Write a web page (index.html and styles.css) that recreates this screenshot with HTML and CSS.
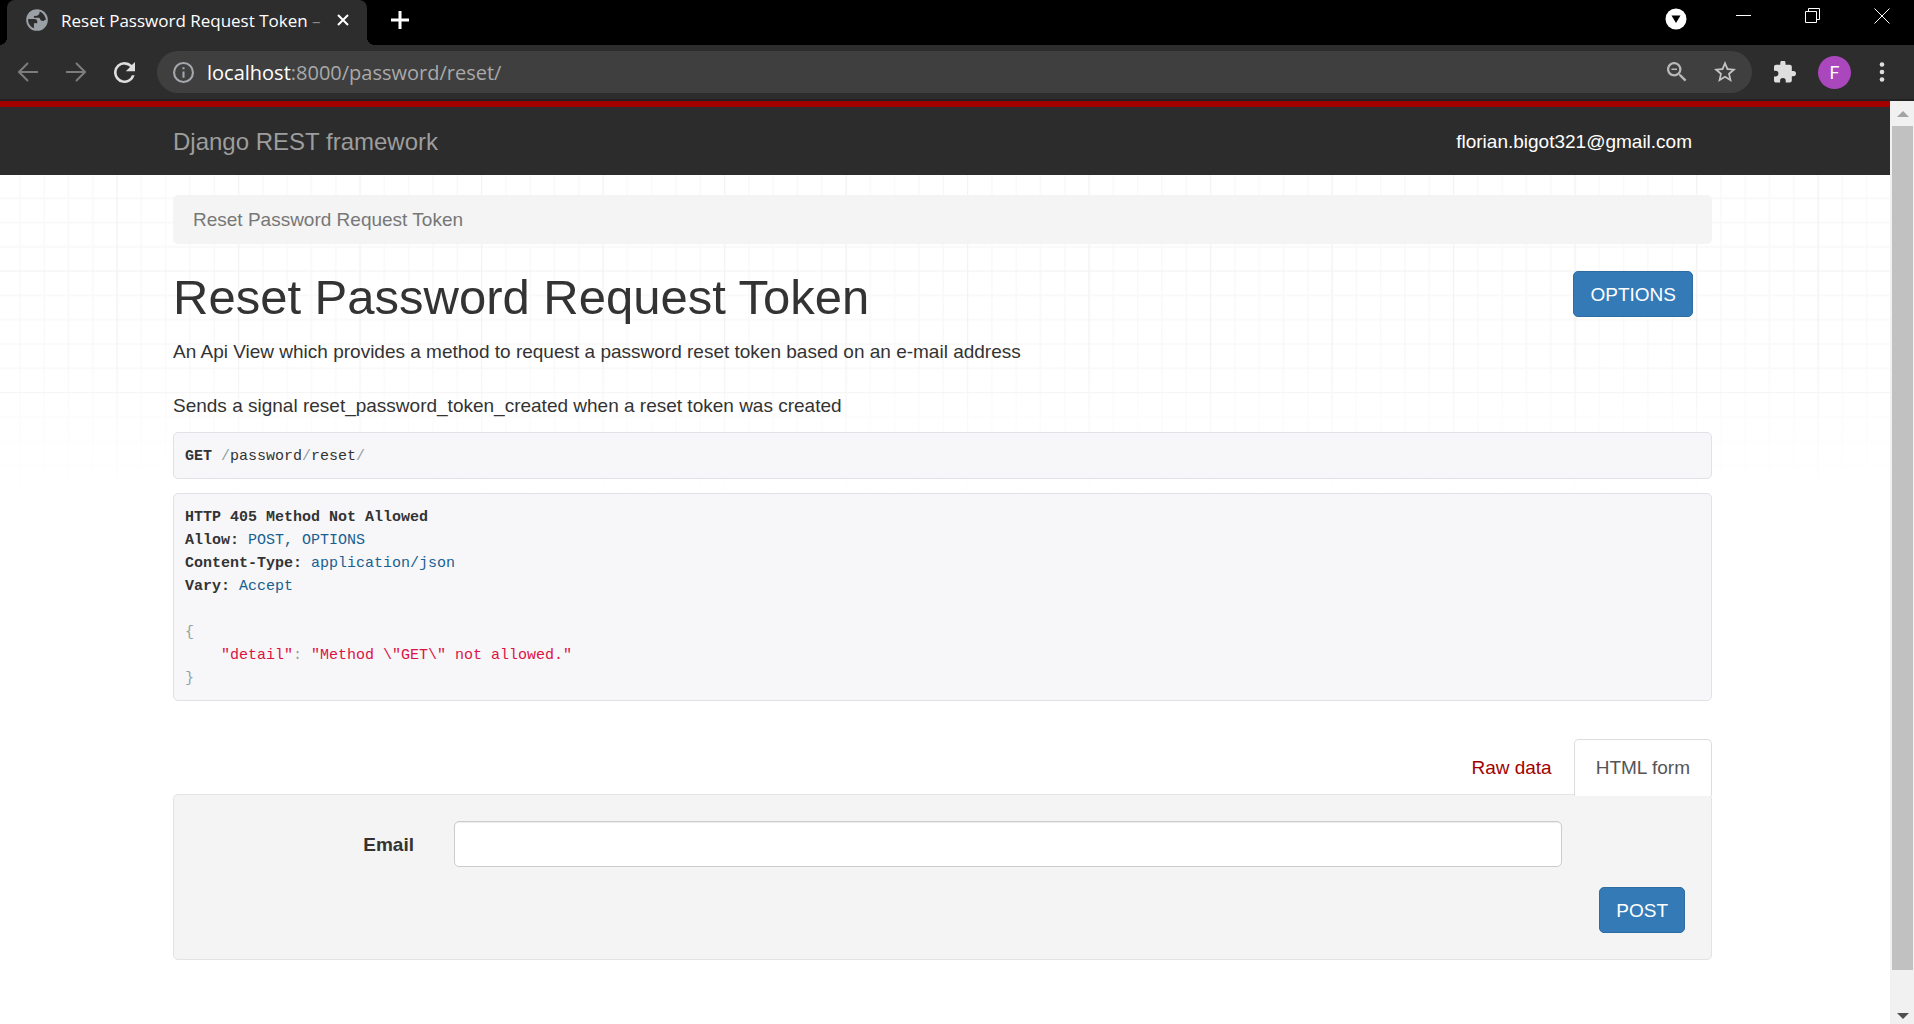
FILE: index.html
```html
<!DOCTYPE html>
<html lang="en">
<head>
<meta charset="utf-8">
<title>Reset Password Request Token – Django REST framework</title>
<link rel="stylesheet" href="styles.css">
</head>
<body>
<header class="browser">
  <div class="tab-strip">
    <div class="tab">
      <svg class="tab-icon" viewBox="0 0 24 24" width="26" height="26"><path fill="#9aa0a6" d="M12 2a10 10 0 1 0 0 20 10 10 0 0 0 0-20zm0 18.200a8.200 8.200 0 0 1-8-9.800l5 .1c2 0 3.500 1 3.500 3v1.500H9.200v4.700c.9.300 1.800.5 2.800.5zm7.300-4.500c-.5-1.200-1.300-1.700-2.600-1.700H15v-2c0-1-.6-1.500-1.600-1.500H9V8h2c1.300 0 2-.7 2-2V4c3.500.5 6.300 3.200 7 6.800.3 1.700 0 3.400-.7 4.900z" fill-rule="evenodd"/><path fill="#9aa0a6" d="M13 3C7 2 3 6 3 11h6.500c2 0 3 1 3 3v1.500H9.200v5c6 1.800 11.800-2.500 11.800-8.500h-2c-.5 1.500-3.500 1-4-.5-.2-1-.8-1.500-1.800-1.500H9V8h2.500c2 0 3-1.500 3-4.500z"/></svg>
      <span class="tab-title">Reset Password Request Token <span class="fade">–</span></span>
      <button class="icon-btn" aria-label="Close tab"><svg viewBox="0 0 12 12" width="12" height="12"><path d="M1 1l10 10M11 1L1 11" stroke="#fff" stroke-width="2"/></svg></button>
    </div>
    <button class="icon-btn new-tab" aria-label="New tab"><svg viewBox="0 0 18 18" width="18" height="18"><path d="M9 0v18M0 9h18" stroke="#fff" stroke-width="3"/></svg></button>
    <div class="window-controls">
      <button class="icon-btn search-tabs" aria-label="Search tabs"><svg viewBox="0 0 22 22" width="22" height="22"><circle cx="11" cy="11" r="10.500" fill="#fff"/><path d="M6.500 7.500h9L11 15z" fill="#000"/></svg></button>
      <button class="icon-btn" aria-label="Minimize"><svg viewBox="0 0 16 16" width="16" height="16"><path d="M0 7.500h15" stroke="#fff"/></svg></button>
      <button class="icon-btn" aria-label="Restore"><svg viewBox="0 0 16 16" width="16" height="16"><path d="M.5 3.500h11v11H.5zM3.500 3.500v-3h11v11h-3" fill="none" stroke="#fff"/></svg></button>
      <button class="icon-btn" aria-label="Close"><svg viewBox="0 0 16 16" width="16" height="16"><path d="M.5.5l15 15M15.500.5l-15 15" stroke="#fff"/></svg></button>
    </div>
  </div>
  <div class="toolbar">
    <button class="icon-btn nav" aria-label="Back"><svg viewBox="0 0 20 20" width="20" height="20"><path d="M20 10H2M10 1l-9 9 9 9" fill="none" stroke="#7c7c7c" stroke-width="2"/></svg></button>
    <button class="icon-btn nav" aria-label="Forward"><svg viewBox="0 0 20 20" width="20" height="20"><path d="M0 10h18M10 1l9 9-9 9" fill="none" stroke="#7c7c7c" stroke-width="2"/></svg></button>
    <button class="icon-btn" aria-label="Reload"><svg viewBox="4 4 16 16" width="21" height="21"><path fill="#dedede" d="M17.650 6.350A7.960 7.960 0 0 0 12 4a8 8 0 1 0 7.730 10h-2.080A6 6 0 1 1 12 6c1.660 0 3.140.690 4.220 1.780L13 11h7V4z"/></svg></button>
    <div class="address">
      <svg viewBox="2 2 20 20" width="21" height="21"><path fill="#a4a7ab" d="M11 7h2v2h-2zm0 4h2v6h-2zm1-9a10 10 0 1 0 0 20 10 10 0 0 0 0-20zm0 18a8 8 0 1 1 0-16 8 8 0 0 1 0 16z"/></svg>
      <span class="url"><span class="host">localhost</span>:8000/password/reset/</span>
      <button class="icon-btn zoom" aria-label="Zoom"><svg viewBox="3 3 18 18" width="20" height="20"><path fill="#b8b8b8" d="M15.500 14h-.790l-.280-.270A6.500 6.500 0 1 0 13.730 14.430l.270.280v.790l5 4.990L20.490 19zm-6 0a4.500 4.500 0 1 1 0-9 4.500 4.500 0 0 1 0 9zM7 8.800h5v1.400H7z"/></svg></button>
      <button class="icon-btn" aria-label="Bookmark"><svg viewBox="2 2 20 20" width="22" height="22"><path fill="#c4c4c4" d="M22 9.240l-7.190-.620L12 2 9.190 8.630 2 9.240l5.460 4.730L5.820 21 12 17.270 18.180 21l-1.630-7.030zM12 15.400l-3.760 2.270 1-4.280-3.320-2.880 4.380-.380L12 6.100l1.710 4.040 4.380.380-3.320 2.880 1 4.280z"/></svg></button>
    </div>
    <button class="icon-btn" aria-label="Extensions"><svg viewBox="2 1.500 21 21" width="22" height="22"><path fill="#dedede" d="M20.500 11H19V7a2 2 0 0 0-2-2h-4V3.500a2.500 2.500 0 0 0-5 0V5H4a2 2 0 0 0-2 2v3.800h1.500a2.700 2.700 0 0 1 0 5.400H2V20c0 1.100.9 2 2 2h3.800v-1.500a2.700 2.700 0 0 1 5.400 0V22H17a2 2 0 0 0 2-2v-4h1.500a2.500 2.500 0 0 0 0-5z"/></svg></button>
    <button class="avatar" aria-label="Profile">F</button>
    <button class="icon-btn" aria-label="Menu"><svg viewBox="0 0 6 20" width="6" height="20"><g fill="#dedede"><circle cx="3" cy="2.500" r="2.300"/><circle cx="3" cy="10" r="2.300"/><circle cx="3" cy="17.500" r="2.300"/></g></svg></button>
  </div>
</header>
<div class="viewport">
  <div class="page">
    <svg class="grid" aria-hidden="true">
      <defs>
        <pattern id="lattice" width="90" height="90" patternUnits="userSpaceOnUse" patternTransform="translate(116.400 48) scale(1.350)">
          <path d="M18.500 0v90M36.500 0v90M54.500 0v90M72.500 0v90M0 18.500h90M0 36.500h90M0 54.500h90M0 72.500h90" stroke="#f8f8f8"/>
          <path d="M.5 0v90M0 .5h90" stroke="#f2f2f2"/>
        </pattern>
      </defs>
      <rect width="100%" height="100%" fill="url(#lattice)"/>
    </svg>
    <nav class="navbar">
      <a class="brand" href="#">Django REST framework</a>
      <span class="user">florian.bigot321@gmail.com</span>
    </nav>
    <main class="content">
      <ul class="breadcrumb"><li><a href="#">Reset Password Request Token</a></li></ul>
      <div class="heading">
        <h1>Reset Password Request Token</h1>
        <button class="btn">OPTIONS</button>
      </div>
      <p>An Api View which provides a method to request a password reset token based on an e-mail address</p>
      <p>Sends a signal reset_password_token_created when a reset token was created</p>
      <pre class="code request"><b>GET</b> <i>/</i>password<i>/</i>reset<i>/</i></pre>
      <pre class="code response"><b>HTTP 405 Method Not Allowed</b>
<b>Allow:</b> <span class="lit">POST, OPTIONS</span>
<b>Content-Type:</b> <span class="lit">application/json</span>
<b>Vary:</b> <span class="lit">Accept</span>

<i>{</i>
    <span class="str">"detail"</span><i>:</i> <span class="str">"Method \"GET\" not allowed."</span>
<i>}</i></pre>
      <div class="tabs">
        <a class="form-tab" href="#">Raw data</a>
        <a class="form-tab active" href="#">HTML form</a>
      </div>
      <form class="well">
        <div class="field">
          <label for="email">Email</label>
          <input id="email" type="email">
        </div>
        <div class="actions"><button class="btn" type="button">POST</button></div>
      </form>
    </main>
  </div>
  <div class="scrollbar" aria-hidden="true">
    <svg viewBox="0 0 12 6" width="12" height="6"><path d="M0 6l6-6 6 6z" fill="#a3a3a3"/></svg>
    <div class="track"><div class="thumb"></div></div>
    <svg viewBox="0 0 12 6" width="12" height="6"><path d="M0 0l6 6 6-6z" fill="#505050"/></svg>
  </div>
</div>
</body>
</html>
```
FILE: styles.css
```css
* { box-sizing: border-box; }
body {
  margin: 0;
  height: 100vh;
  display: flex;
  flex-direction: column;
  font: 19px/27px "Liberation Sans", Arial, sans-serif;
  color: #333;
  background: #fff;
}
button { font: inherit; cursor: pointer; }
a { text-decoration: none; }
svg { display: block; flex: none; }

/* Browser frame */
.browser {
  flex: none;
  font-family: "Open Sans", "Noto Sans", sans-serif;
  background: #2d2d2d;
  border-bottom: 2px solid #222;
}
.icon-btn { padding: 0; border: 0; background: none; flex: none; }
.tab-strip {
  display: flex;
  align-items: center;
  height: 45px;
  padding: 0 24px 0 7px;
  background: #000;
}
.tab {
  position: relative;
  display: flex;
  align-items: center;
  width: 336px;
  flex: none;
  width: 360px;
  height: 45px;
  padding: 0 18px 5px 17px;
  background: #2d2d2d;
  border-radius: 8px 8px 0 0;
}
/* Curved feet joining the tab to the toolbar */
.tab::before,
.tab::after {
  content: "";
  position: absolute;
  bottom: 0;
  width: 8px;
  height: 8px;
}
.tab::before { right: 100%; background: radial-gradient(circle at 0 0, transparent 8px, #2d2d2d 8px); }
.tab::after { left: 100%; background: radial-gradient(circle at 100% 0, transparent 8px, #2d2d2d 8px); }
.tab-title {
  flex: 1;
  margin-left: 11px;
  color: #fff;
  font-size: 17px;
  white-space: nowrap;
}
.fade { color: #888; }
.new-tab { margin: 0 auto 6px 24px; }
.window-controls {
  display: flex;
  align-items: flex-start;
  align-self: flex-start;
  gap: 53px;
  padding-top: 8px;
}
.search-tabs { margin-right: -4px; }
.toolbar {
  display: flex;
  align-items: center;
  height: 54px;
  padding: 0 29px 0 18px;
  gap: 22px;
}
.nav { margin-right: 6px; }
.address {
  flex: 1;
  display: flex;
  align-items: center;
  height: 42px;
  padding: 0 16px;
  background: #3f3f3f;
  border-radius: 21px;
}
.url { flex: 1; margin-left: 13px; font-size: 20px; color: #a9a9a9; }
.host { color: #fff; }
.zoom { margin-right: 27px; }
.avatar {
  width: 33px;
  height: 33px;
  margin-right: 6px;
  padding: 0;
  border: 0;
  border-radius: 50%;
  background: #ab47bc;
  color: #fff;
  font: 18px/33px Roboto, sans-serif;
}

/* Page */
.viewport { flex: 1; display: flex; min-height: 0; }
.page { position: relative; flex: 1; min-width: 0; overflow: hidden; }
.grid {
  position: absolute;
  inset: 0;
  z-index: -1;
  width: 100%;
  height: 400px;
  -webkit-mask-image: linear-gradient(#000 60%, transparent);
  mask-image: linear-gradient(#000 60%, transparent);
}
.navbar {
  display: flex;
  align-items: center;
  justify-content: space-between;
  height: 74px;
  padding: 0 198px 0 173px;
  border-top: 6px solid #a30000;
  background: #2c2c2c;
}
.brand { font-size: 24px; color: #9d9d9d; }
.user { color: #fff; }
.content { padding: 20px 178px 0 173px; }
.breadcrumb {
  margin: 0 0 27px;
  padding: 11px 20px;
  list-style: none;
  background: #f4f4f4;
  border-radius: 5px;
}
.breadcrumb a { color: #777; }
.heading {
  display: flex;
  align-items: center;
  justify-content: space-between;
  padding-right: 19px;
  margin-bottom: 19px;
}
h1 { margin: 0; padding-top: 4px; font-size: 49px; line-height: 44px; font-weight: 400; }
.btn {
  height: 46px;
  padding: 0 16px;
  border: 1px solid #2e6da4;
  border-radius: 5px;
  background: #337ab7;
  color: #fff;
}
.heading .btn { align-self: flex-start; }
p { margin: 0 0 27px; }
.code {
  margin: 0 0 14px;
  padding: 12px 11px 10px;
  border: 1px solid #e1e1e8;
  border-radius: 5px;
  background: #f7f7f9;
  font: 15px/23px "Liberation Mono", Consolas, monospace;
}
.code i { font-style: normal; color: #93a1a1; }
.request { margin-top: -14px; }
.lit { color: #195f91; }
.str { color: #d14; }
.tabs {
  position: relative;
  display: flex;
  justify-content: flex-end;
  margin-top: 38px;
}
.form-tab {
  padding: 14px 21px 15px;
  border: 1px solid transparent;
  border-bottom: 0;
  border-radius: 5px 5px 0 0;
  color: #a30000;
}
.active { background: #fff; border-color: #ddd; color: #555; }
.well {
  margin-top: -2px;
  padding: 26px;
  border: 1px solid #e3e3e3;
  border-radius: 5px;
  background: #f4f4f4;
}
.field {
  display: grid;
  grid-template-columns: 214px 1fr;
  gap: 40px;
  padding-right: 123px;
  align-items: center;
}
.field label { text-align: right; font-weight: 700; }
.field input {
  width: 100%;
  height: 46px;
  padding: 8px 16px;
  border: 1px solid #ccc;
  border-radius: 5px;
  background: #fff;
  box-shadow: inset 0 1px 1px rgba(0, 0, 0, .075);
  font: inherit;
}
.actions { display: flex; justify-content: flex-end; margin-top: 20px; }

.scrollbar {
  display: flex;
  flex-direction: column;
  align-items: center;
  width: 24px;
  padding: 10px 1px 5px 2px;
  background: #f1f1f1;
}
.track { flex: 1; width: 100%; padding: 9px 0 43px; }
.thumb { height: 100%; background: #c1c1c1; }
```
